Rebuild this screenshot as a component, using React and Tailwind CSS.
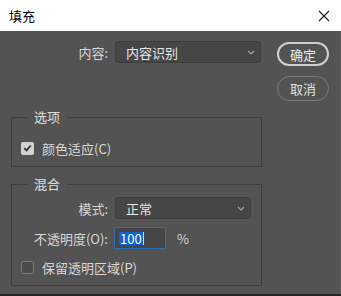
import { useState } from 'react';

const font = { fontFamily: '"Noto Sans CJK SC", "Noto Sans", sans-serif' };

const Chevron = () => (
  <svg width="8" height="5" viewBox="0 0 8 5" className="shrink-0">
    <path d="M1 1 L4 4 L7 1" fill="none" stroke="#a8a8a8" strokeWidth="1.1" />
  </svg>
);

const Select = ({ value, width }) => (
  <div
    className={`h-[22px] ${width} flex items-center justify-between pl-[10px] pr-[5px] bg-[#464646] border border-[#3d3d3d] rounded-[3px] text-[13px] text-[#e8e8e8]`}
  >
    <span className="leading-none">{value}</span>
    <Chevron />
  </div>
);

const Checkbox = ({ checked }) =>
  checked ? (
    <div className="w-[13px] h-[13px] rounded-[2px] bg-[#d2d2d2] flex items-center justify-center">
      <svg width="9" height="8" viewBox="0 0 9 8">
        <path d="M1.2 4.2 L3.5 6.4 L7.8 1.5" fill="none" stroke="#333" strokeWidth="1.8" />
      </svg>
    </div>
  ) : (
    <div className="w-[13px] h-[13px] rounded-[2px] bg-[#4a4a4a] border border-[#7a7a7a]" />
  );

export default function App() {
  const [opacity] = useState('100');

  return (
    <div className="w-[341px] h-[296px] bg-[#262626] overflow-hidden select-none" style={font}>
      {/* Title bar */}
      <div className="h-[31px] bg-white flex items-center justify-between pl-[9px] pr-[10px]">
        <span className="text-[13px] text-black leading-none">填充</span>
        <svg width="12" height="12" viewBox="0 0 12 12" className="mr-[1px]">
          <path d="M1 1 L11 11 M11 1 L1 11" stroke="#1a1a1a" strokeWidth="1.1" />
        </svg>
      </div>

      {/* Body */}
      <div className="h-[263px] bg-[#535353] border-r border-[#5f5f5f] flex pl-[11px] pt-[10px] text-[13px] text-[#d8d8d8]">
        <div className="w-[251px] flex flex-col">
          <div className="h-[22px] flex items-center">
            <span className="w-[98px] text-right pr-[1px] leading-none">内容:</span>
            <div className="ml-[6px]">
              <Select value="内容识别" width="w-[146px]" />
            </div>
          </div>

          <fieldset className="mt-[46px] border border-[#3e3e3e]">
            <legend className="ml-[15px] px-[7px] leading-[16px] text-[13px] text-[#e0e0e0]">选项</legend>
            <div className="pt-[15px] pb-[10px] pl-[9px] flex items-center h-[16px] box-content">
              <Checkbox checked />
              <span className="ml-[8px] leading-none">颜色适应(C)</span>
            </div>
          </fieldset>

          <fieldset className="mt-[9px] border border-[#3e3e3e]">
            <legend className="ml-[15px] px-[7px] leading-[16px] text-[13px] text-[#e0e0e0]">混合</legend>
            <div className="pt-[5px] pb-[11px] flex flex-col">
              <div className="h-[22px] flex items-center">
                <span className="w-[97px] text-right pr-[1px] leading-none">模式:</span>
                <div className="ml-[6px]">
                  <Select value="正常" width="w-[136px]" />
                </div>
              </div>
              <div className="mt-[8px] h-[22px] flex items-center">
                <span className="w-[97px] text-right pr-[1px] leading-none">不透明度(O):</span>
                <div className="ml-[5px] w-[52px] h-[22px] bg-[#464646] border border-[#2f6db3] flex items-center pl-[4px]">
                  <span className="bg-[#0b63d6] text-white leading-[13px] px-[1px]">{opacity}</span>
                  <span className="w-[1px] h-[13px] bg-[#e0e0e0]" />
                </div>
                <span className="ml-[11px] leading-none">%</span>
              </div>
              <div className="mt-[11px] h-[14px] flex items-center pl-[9px]">
                <Checkbox />
                <span className="ml-[8px] leading-none">保留透明区域(P)</span>
              </div>
            </div>
          </fieldset>
        </div>

        <div className="ml-[15px] pt-[1px] flex flex-col gap-[10px]">
          <button className="w-[52px] h-[24px] rounded-full border-2 border-[#d0d0d0] text-[13px] text-[#ececec] leading-none">
            确定
          </button>
          <button className="w-[52px] h-[25px] rounded-full border border-[#7a7a7a] text-[13px] text-[#e0e0e0] leading-none">
            取消
          </button>
        </div>
      </div>
    </div>
  );
}
